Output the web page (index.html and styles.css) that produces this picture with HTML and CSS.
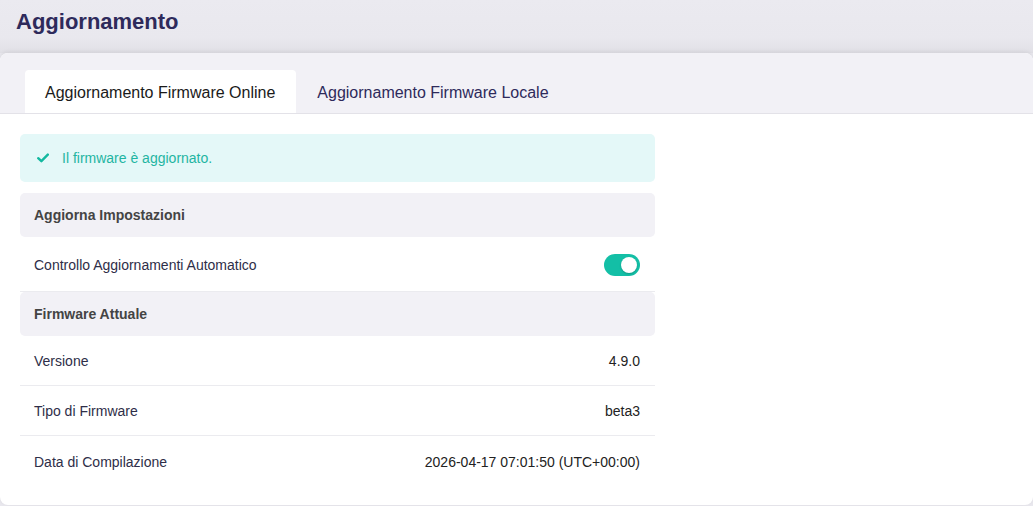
FILE: index.html
```html
<!DOCTYPE html>
<html lang="it">
<head>
    <meta charset="UTF-8">
    <title>Aggiornamento</title>
    <link rel="stylesheet" href="styles.css">
</head>
<body>
    <div class="page-title">Aggiornamento</div>

    <div class="card">
        <div class="tabs">
            <div class="tab active">Aggiornamento Firmware Online</div>
            <div class="tab">Aggiornamento Firmware Locale</div>
        </div>

        <div class="content">
            <div class="alert">
                <svg class="check" width="12" height="10" viewBox="0 0 12 10">
                    <path d="M1.2 5.2 L4.4 8.2 L10.8 1.6" fill="none" stroke="#13b9a0" stroke-width="2.4" stroke-linecap="round" stroke-linejoin="round"/>
                </svg>
                <span>Il firmware è aggiornato.</span>
            </div>

            <div class="section-head">Aggiorna Impostazioni</div>
            <div class="row row-toggle">
                <span>Controllo Aggiornamenti Automatico</span>
                <div class="toggle on"><div class="knob"></div></div>
            </div>

            <div class="section-head">Firmware Attuale</div>
            <div class="row">
                <span>Versione</span>
                <span class="value">4.9.0</span>
            </div>
            <div class="row">
                <span>Tipo di Firmware</span>
                <span class="value">beta3</span>
            </div>
            <div class="row last">
                <span>Data di Compilazione</span>
                <span class="value">2026-04-17 07:01:50 (UTC+00:00)</span>
            </div>
        </div>
    </div>
</body>
</html>
```

FILE: styles.css
```css
body {
    margin: 0;
    padding: 0;
    background-color: #e9e8ee;
    font-family: "Liberation Sans", Arial, sans-serif;
    height: 506px;
    overflow: hidden;
}

.page-title {
    height: 53px;
    box-sizing: border-box;
    padding: 9px 16px 0;
    font-size: 22px;
    font-weight: bold;
    color: #2e2a5b;
    background: linear-gradient(#ebeaf0 0%, #e9e8ee 70%, #e1e0e6 100%);
}

.card {
    background: #ffffff;
    border-radius: 8px;
    box-shadow: 0 -1px 4px rgba(0, 0, 0, 0.08);
    height: 452px;
    overflow: hidden;
}

.tabs {
    display: flex;
    background: #f2f1f6;
    padding: 17px 0 0 25px;
    height: 61px;
    box-sizing: border-box;
    border-bottom: 1px solid #e3e2e8;
}

.tab {
    height: 43px;
    box-sizing: border-box;
    padding: 14px 20px 0 21px;
    font-size: 16px;
    white-space: nowrap;
    color: #2e2a5b;
    border-radius: 4px 4px 0 0;
}

.tab.active {
    background: #ffffff;
    color: #1a1a1a;
    padding: 14px 21px 0 20px;
}

.content {
    width: 635px;
    padding: 20px 0 0 20px;
}

.alert {
    display: flex;
    align-items: center;
    height: 48px;
    background: #e4f8f8;
    border-radius: 5px;
    padding-left: 17px;
    font-size: 14px;
    color: #1fb5a2;
    margin-bottom: 11px;
}

.check {
    margin-right: 13px;
}

.section-head {
    height: 44px;
    display: flex;
    align-items: center;
    padding-left: 14px;
    background: #f2f1f6;
    border-radius: 5px;
    font-size: 14px;
    font-weight: bold;
    color: #444444;
}

.row {
    height: 50px;
    box-sizing: border-box;
    display: flex;
    align-items: center;
    justify-content: space-between;
    padding: 1px 15px 0 14px;
    border-bottom: 1px solid #ebebef;
    font-size: 14px;
    color: #2e2e48;
}

.row-toggle {
    height: 55px;
}

.row.last {
    border-bottom: none;
}

.value {
    color: #222222;
}

.toggle {
    width: 36px;
    height: 22px;
    border-radius: 11px;
    background: #13bfa6;
    position: relative;
}

.knob {
    position: absolute;
    top: 3px;
    right: 3px;
    width: 16px;
    height: 16px;
    border-radius: 50%;
    background: #ffffff;
    box-shadow: 0 1px 2px rgba(0, 0, 0, 0.2);
}
```
